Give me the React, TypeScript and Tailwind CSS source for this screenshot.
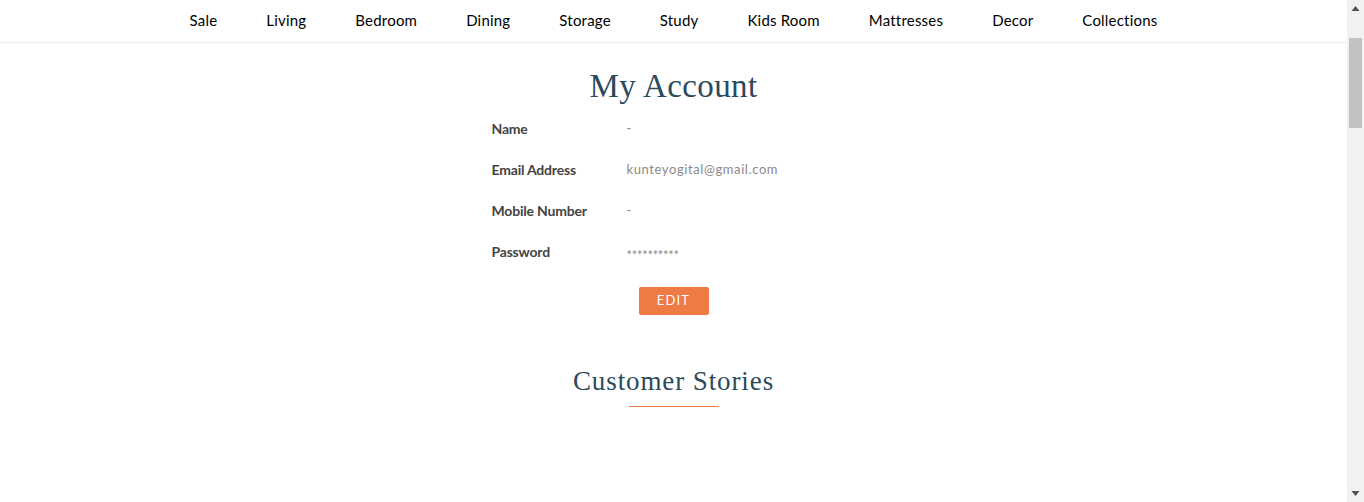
const navItems = [
  "Sale",
  "Living",
  "Bedroom",
  "Dining",
  "Storage",
  "Study",
  "Kids Room",
  "Mattresses",
  "Decor",
  "Collections",
];

const details = [
  { label: "Name", value: "-" },
  { label: "Email Address", value: "kunteyogital@gmail.com" },
  { label: "Mobile Number", value: "-" },
  { label: "Password", value: "**********" },
];

function Scrollbar() {
  return (
    <div className="w-[17px] h-full bg-[#f1f1f1] flex flex-col items-center shrink-0">
      <svg width="9" height="17" viewBox="0 0 9 17">
        <path d="M0.5 11 L4.5 6 L8.5 11 Z" fill="#505050" />
      </svg>
      <div className="mt-[21px] w-[13px] h-[90px] bg-[#c1c1c1]" />
      <div className="flex-1" />
      <svg width="9" height="17" viewBox="0 0 9 17">
        <path d="M0.5 6 L4.5 11 L8.5 6 Z" fill="#505050" />
      </svg>
    </div>
  );
}

export default function App() {
  return (
    <div className="h-screen flex bg-white overflow-hidden font-['Lato',sans-serif]">
      <main className="flex-1 min-w-0">
        {/* Top nav */}
        <nav className="h-[43px] border-b border-[#ececec] flex items-center justify-center gap-[49px] text-[15px] text-black tracking-[0.2px]">
          {navItems.map((item) => (
            <a key={item} href="#" className="leading-none pb-[2px]">
              {item}
            </a>
          ))}
        </nav>

        {/* Account */}
        <section className="flex flex-col items-center pt-[25px]">
          <h1 className="text-[33px] leading-[36px] text-[#2b4a5c] tracking-[0.4px] font-['Liberation_Serif',serif]">
            My Account
          </h1>

          <div className="w-[364px] mt-[16px] flex flex-col gap-[23px]">
            {details.map((row) => (
              <div key={row.label} className="flex items-start h-[18px]">
                <span className="w-[135px] text-[14px] font-bold text-[#444] tracking-[-0.2px] leading-[18px]">
                  {row.label}
                </span>
                <span
                  className={
                    row.label === "Password"
                      ? "text-[13px] text-[#8a8a8a] tracking-[-0.3px] leading-[18px] mt-[3px]"
                      : "text-[13px] text-[#8a8a8a] tracking-[0.6px] leading-[18px] -mt-[1px]"
                  }
                >
                  {row.value}
                </span>
              </div>
            ))}
          </div>

          <button className="mt-[26px] w-[70px] h-[28px] rounded-[2px] bg-[#ee7a45] text-white text-[13px] tracking-[1.2px]">
            EDIT
          </button>

          <h2 className="mt-[51px] text-[27px] leading-[30px] text-[#2b4a5c] tracking-[0.9px] font-['Liberation_Serif',serif]">
            Customer Stories
          </h2>
          <div className="mt-[10px] w-[90px] h-px bg-[#ee7a45]" />
        </section>
      </main>
      <Scrollbar />
    </div>
  );
}
